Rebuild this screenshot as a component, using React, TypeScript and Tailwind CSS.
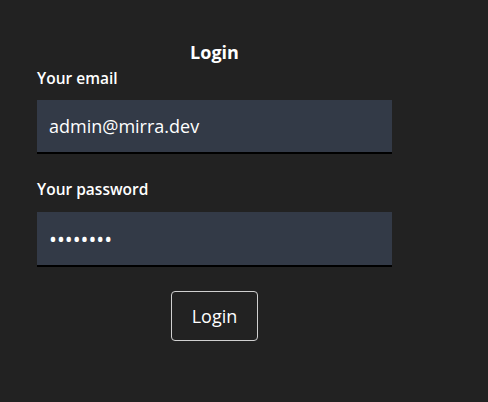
export default function App() {
  return (
    <div className="min-h-screen w-full bg-[#222222] text-white font-['Open_Sans',sans-serif]">
      <form className="ml-[37px] flex w-[355px] flex-col pt-[40px]">
        <h1 className="text-center text-[18px] font-bold leading-[24px]">Login</h1>
        <label className="mt-[3px] text-[15.5px] font-semibold leading-[22px]">Your email</label>
        <input
          type="email"
          defaultValue="admin@mirra.dev"
          className="mt-[11px] h-[54px] border-b-2 border-black bg-[#333a47] px-[12px] text-[18px] text-white outline-none"
        />
        <label className="mt-[24px] text-[15.5px] font-semibold leading-[22px]">Your password</label>
        <input
          type="password"
          defaultValue="password"
          className="mt-[12px] h-[55px] border-b-2 border-black bg-[#333a47] px-[12px] text-[21px] text-white outline-none"
        />
        <button
          type="button"
          className="mt-[24px] h-[50px] w-[87px] self-center rounded-[4px] border border-[#d0d0d0] text-[18px]"
        >
          Login
        </button>
      </form>
    </div>
  );
}
